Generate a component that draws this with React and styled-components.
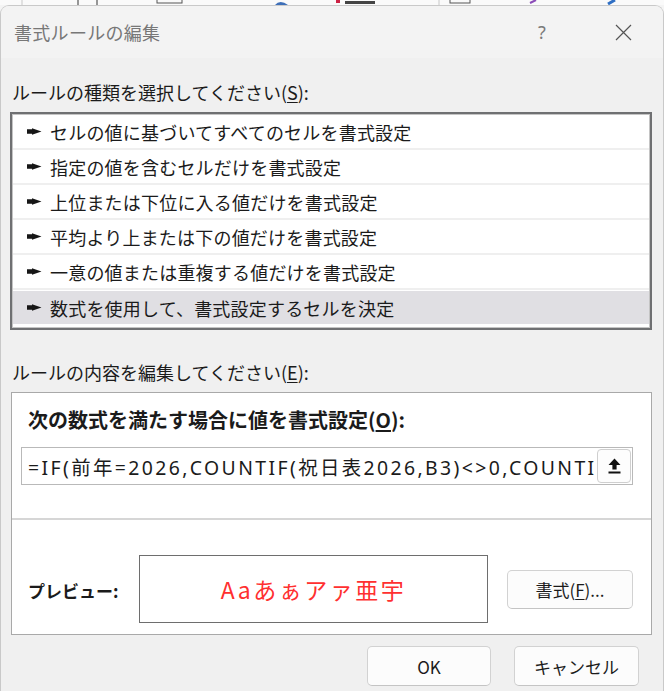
import React from "react";
import styled, { createGlobalStyle } from "styled-components";

const Global = createGlobalStyle`
  html, body { margin: 0; padding: 0; background: #f4f4f4; }
  body { font-family: "Noto Sans CJK JP", "Noto Sans", sans-serif; color: #1b1b1b; }
  #root { width: 664px; height: 691px; overflow: hidden; }
`;

const Ribbon = styled.svg`
  display: block;
  width: 664px;
  height: 5px;
  background: #fafafa;
`;

const Dialog = styled.div`
  width: 664px;
  height: 686px;
  box-sizing: border-box;
  border: 1px solid #c9c9c9;
  border-bottom: none;
  border-radius: 9px 9px 0 0;
  background: #f0f0f0;
  overflow: hidden;
  display: flex;
  flex-direction: column;
`;

const TitleBar = styled.div`
  height: 52px;
  flex: none;
  background: #f3f3f3;
  display: flex;
  align-items: center;
  padding: 0 20px 0 13px;
`;

const Title = styled.div`
  flex: 1;
  font-size: 18px;
  color: #777777;
  letter-spacing: 0.3px;
`;

const TitleBtn = styled.div`
  width: ${p => p.$w}px;
  margin-left: ${p => p.$ml || 0}px;
  display: flex;
  justify-content: center;
  align-items: center;
  color: #7a7a7a;
  font-size: 18px;
  font-family: "Noto Sans", sans-serif;
`;

const Body = styled.div`
  flex: 1;
  display: flex;
  flex-direction: column;
  padding: 22px 11px 0 9px;
`;

const SectionLabel = styled.div`
  font-size: 18px;
  line-height: 24px;
  height: 24px;
  padding-left: 2px;
  margin-top: ${p => p.$mt || 0}px;
  color: #1b1b1b;
  u { text-decoration: underline; text-underline-offset: 2px; }
`;

const List = styled.div`
  margin-top: 8px;
  height: 218px;
  box-sizing: border-box;
  border: 2px solid #6f7072;
  box-shadow: inset 0 0 0 1px #c4c4c4;
  padding: 1px;
  background: #ffffff;
  display: flex;
  flex-direction: column;
`;

const Row = styled.div`
  height: 33px;
  flex: none;
  display: flex;
  align-items: center;
  gap: 8px;
  padding-left: 14px;
  font-size: 18px;
  letter-spacing: 0.2px;
  color: #1b1b1b;
  background: ${p => (p.$selected ? "#e0dfe3" : "#ffffff")};
  border-bottom: ${p => (p.$last ? "none" : "2px solid #efefef")};
  margin-top: ${p => (p.$last ? 1 : 0)}px;
`;

const RowArrow = () => (
  <svg width="15" height="7" viewBox="0 0 15 7">
    <polygon points="0,1.3 5,1.3 5,0.3 14.5,3.5 5,6.7 5,5.7 0,5.7" fill="#161616" />
  </svg>
);

const ContentBox = styled.div`
  margin-top: 8px;
  margin-left: 1px;
  height: 243px;
  box-sizing: border-box;
  border: 1px solid #a9a9a9;
  background: #ffffff;
  display: flex;
  flex-direction: column;
`;

const BoldLabel = styled.div`
  margin-top: 14px;
  padding-left: 16px;
  font-size: 20px;
  line-height: 26px;
  font-weight: 700;
  color: #1b1b1b;
  u { text-underline-offset: 2px; }
`;

const FormulaField = styled.div`
  margin: 14px 18px 0 9px;
  height: 38px;
  box-sizing: border-box;
  border: 1px solid #b9b9b9;
  display: flex;
  align-items: center;
  padding: 0 1px 0 6px;
  background: #ffffff;
`;

const FormulaText = styled.div`
  flex: 1;
  white-space: nowrap;
  font-family: "Noto Sans", "Noto Sans CJK JP", sans-serif;
  font-size: 19.4px;
  letter-spacing: 2.4px;
  color: #1b1b1b;
`;

const CollapseBtn = styled.div`
  width: 34px;
  height: 34px;
  box-sizing: border-box;
  border: 1px solid #cfcfcf;
  border-radius: 4px;
  background: #fdfdfd;
  display: flex;
  align-items: center;
  justify-content: center;
`;

const Divider = styled.div`
  margin-top: 33px;
  height: 2px;
  background: #d6d6d6;
`;

const PreviewRow = styled.div`
  margin-top: 35px;
  display: flex;
  align-items: center;
  padding-left: 16px;
`;

const PreviewLabel = styled.div`
  width: 111px;
  font-size: 17px;
  font-weight: 700;
  color: #1b1b1b;
  margin-top: 2px;
`;

const PreviewBox = styled.div`
  width: 349px;
  height: 68px;
  box-sizing: border-box;
  border: 1px solid #6e6e6e;
  display: flex;
  align-items: center;
  justify-content: center;
  color: #ff3030;
  font-size: 23px;
  letter-spacing: 2.5px;
`;

const Button = styled.div`
  width: ${p => p.$w}px;
  height: ${p => p.$h}px;
  margin-left: ${p => p.$ml || 0}px;
  box-sizing: border-box;
  border: 1px solid #d2d2d2;
  border-bottom-color: #c4c4c4;
  border-radius: 5px;
  background: #fcfcfc;
  display: flex;
  align-items: center;
  justify-content: center;
  font-size: 17px;
  color: #1b1b1b;
  u { text-underline-offset: 2px; }
`;

const Footer = styled.div`
  margin-top: 11px;
  display: flex;
  justify-content: flex-end;
  gap: 23px;
  padding-right: 13px;
`;

const rules = [
  "セルの値に基づいてすべてのセルを書式設定",
  "指定の値を含むセルだけを書式設定",
  "上位または下位に入る値だけを書式設定",
  "平均より上または下の値だけを書式設定",
  "一意の値または重複する値だけを書式設定",
  "数式を使用して、書式設定するセルを決定",
];

export default function App() {
  return (
    <>
      <Global />
      <Ribbon viewBox="0 0 664 5">
        <line x1="22" y1="0" x2="22" y2="5" stroke="#c8c8c8" />
        <line x1="78" y1="0" x2="78" y2="5" stroke="#333" />
        <line x1="97" y1="0" x2="97" y2="5" stroke="#333" />
        <rect x="157" y="-2" width="25" height="5" fill="none" stroke="#555" />
        <path d="M275 5 Q280 -1 288 5" fill="#3e6fb8" />
        <rect x="336" y="0" width="4" height="3" fill="#c24" />
        <rect x="345" y="1" width="30" height="3" fill="#444" />
        <line x1="439" y1="0" x2="439" y2="5" stroke="#c8c8c8" />
        <rect x="450" y="-2" width="20" height="5" fill="none" stroke="#555" />
        <line x1="530" y1="3" x2="536" y2="0" stroke="#8b4bb8" strokeWidth="2" />
        <line x1="608" y1="4" x2="615" y2="0" stroke="#2f6fc4" strokeWidth="3" />
      </Ribbon>
      <Dialog>
        <TitleBar>
          <Title>書式ルールの編集</Title>
          <TitleBtn $w={40}>?</TitleBtn>
          <TitleBtn $w={40} $ml={41}>
            <svg width="17" height="17" viewBox="0 0 17 17">
              <path d="M1 1 L16 16 M16 1 L1 16" stroke="#555" strokeWidth="1.2" fill="none" />
            </svg>
          </TitleBtn>
        </TitleBar>
        <Body>
          <SectionLabel>
            ルールの種類を選択してください(<u>S</u>):
          </SectionLabel>
          <List>
            {rules.map((r, i) => (
              <Row key={r} $selected={i === 5} $last={i === 5}>
                <RowArrow />
                <span>{r}</span>
              </Row>
            ))}
          </List>
          <SectionLabel $mt={30}>
            ルールの内容を編集してください(<u>E</u>):
          </SectionLabel>
          <ContentBox>
            <BoldLabel>
              次の数式を満たす場合に値を書式設定(<u>O</u>):
            </BoldLabel>
            <FormulaField>
              <FormulaText>=IF(前年=2026,COUNTIF(祝日表2026,B3)&lt;&gt;0,COUNTI</FormulaText>
              <CollapseBtn>
                <svg width="13" height="16" viewBox="0 0 13 16">
                  <path d="M6.5 0.5 L12.5 7 H8.6 V11.5 H4.4 V7 H0.5 Z" fill="#111" />
                  <rect x="0.5" y="13.5" width="12" height="2" fill="#111" />
                </svg>
              </CollapseBtn>
            </FormulaField>
            <Divider />
            <PreviewRow>
              <PreviewLabel>プレビュー:</PreviewLabel>
              <PreviewBox>Aaあぁアァ亜宇</PreviewBox>
              <Button $w={126} $h={39} $ml={19}>
                書式(<u>F</u>)...
              </Button>
            </PreviewRow>
          </ContentBox>
          <Footer>
            <Button $w={124} $h={40}>OK</Button>
            <Button $w={125} $h={40}>キャンセル</Button>
          </Footer>
        </Body>
      </Dialog>
    </>
  );
}
